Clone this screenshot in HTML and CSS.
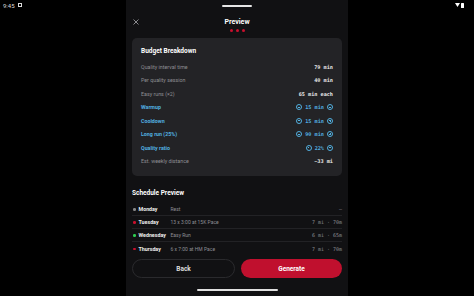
FILE: index.html
```html
<!DOCTYPE html>
<html>
<head>
<meta charset="utf-8">
<link rel="stylesheet" href="styles.css">
</head>
<body>
<div class="status">
  <div class="status-left"><span class="time">9:45</span><span class="sq"></span></div>
  <div class="status-right">
    <svg width="5" height="4" viewBox="0 0 5 4"><path d="M0 0 H5 L2.5 4 Z" fill="#fff"/></svg>
    <span class="batt"></span>
  </div>
</div>
<div class="stage">
  <div class="panel">
    <div class="handle"></div>
    <div class="header">
      <svg class="close" width="6" height="6" viewBox="0 0 6 6"><path d="M0.5 0.5 L5.5 5.5 M5.5 0.5 L0.5 5.5" stroke="#8a8a8e" stroke-width="1"/></svg>
      <div class="title">Preview</div>
      <div class="dots"><span></span><span></span><span></span></div>
    </div>
    <div class="card">
      <div class="card-title">Budget Breakdown</div>
      <div class="row"><span class="lbl">Quality interval time</span><span class="val">79 min</span></div>
      <div class="row"><span class="lbl">Per quality session</span><span class="val">40 min</span></div>
      <div class="row"><span class="lbl">Easy runs (×2)</span><span class="val">65 min each</span></div>
      <div class="row blue"><span class="lbl">Warmup</span><span class="ctrl"><i class="btn minus"></i><span class="val">15 min</span><i class="btn plus"></i></span></div>
      <div class="row blue"><span class="lbl">Cooldown</span><span class="ctrl"><i class="btn minus"></i><span class="val">15 min</span><i class="btn plus"></i></span></div>
      <div class="row blue"><span class="lbl">Long run (25%)</span><span class="ctrl"><i class="btn minus"></i><span class="val">90 min</span><i class="btn plus"></i></span></div>
      <div class="row blue"><span class="lbl">Quality ratio</span><span class="ctrl"><i class="btn minus"></i><span class="val">22%</span><i class="btn plus"></i></span></div>
      <div class="row"><span class="lbl">Est. weekly distance</span><span class="val">~33 mi</span></div>
    </div>
    <div class="sched-title">Schedule Preview</div>
    <div class="sched">
      <div class="srow"><span class="dot gray"></span><span class="day">Monday</span><span class="desc">Rest</span><span class="meta">—</span></div>
      <div class="srow"><span class="dot red"></span><span class="day">Tuesday</span><span class="desc">13 x 3:00 at 15K Pace</span><span class="meta">7 mi · 70m</span></div>
      <div class="srow"><span class="dot green"></span><span class="day">Wednesday</span><span class="desc">Easy Run</span><span class="meta">6 mi · 65m</span></div>
      <div class="srow"><span class="dot red"></span><span class="day">Thursday</span><span class="desc">6 x 7:00 at HM Pace</span><span class="meta">7 mi · 70m</span></div>
    </div>
    <div class="actions">
      <div class="back">Back</div>
      <div class="gen">Generate</div>
    </div>
    <div class="homebar"></div>
  </div>
</div>
</body>
</html>
```
FILE: styles.css
```css
* { box-sizing: border-box; }
html, body { margin: 0; padding: 0; }
body {
  width: 474px; height: 296px; background: #000; overflow: hidden;
  font-family: Roboto, "Liberation Sans", sans-serif; color: #fff;
  position: relative;
}
.status {
  position: absolute; left: 0; top: 0; width: 474px; height: 10px;
  display: flex; justify-content: space-between; align-items: center;
  padding: 0 10px 0 3px; z-index: 2;
}
.status-left { display: flex; align-items: center; gap: 3px; }
.time { font-size: 6px; color: #ddd; }
.sq { width: 4px; height: 4px; border: 1px solid #ddd; background: #000; }
.status-right { display: flex; align-items: center; gap: 1px; }
.batt { width: 3px; height: 5px; background: #fff; border-radius: 0.5px; }
.stage { display: flex; justify-content: center; height: 296px; }
.panel {
  width: 222px; height: 296px; background: #111113;
  display: flex; flex-direction: column; padding: 5px 6px 0;
}
.handle { align-self: center; width: 30px; height: 2px; background: #e6e6e6; border-radius: 1px; }
.header { position: relative; height: 30.7px; display: flex; flex-direction: column; align-items: center; padding-top: 9.5px; }
.close { position: absolute; left: 1px; top: 11.5px; }
.title { font-size: 7px; font-weight: 700; line-height: 10px; }
.dots { display: flex; gap: 3px; margin-top: 2px; }
.dots span { width: 3px; height: 3px; border-radius: 50%; background: #c8102e; }
.card {
  background: #232326; border-radius: 5px; padding: 8px 9px 8.5px;
  display: flex; flex-direction: column;
}
.card-title { font-size: 6.5px; font-weight: 700; line-height: 10px; margin-bottom: 4.6px; }
.row { height: 13.45px; display: flex; justify-content: space-between; align-items: center; }
.lbl { font-size: 5.3px; color: #8e8e93; }
.val { font-family: "DejaVu Sans Mono", "Liberation Mono", monospace; font-weight: 700; font-size: 5.2px; color: #e8e8e8; }
.blue .lbl { color: #52b0e0; font-weight: 700; }
.blue .val { color: #52b0e0; }
.ctrl { display: flex; align-items: center; gap: 3px; }
.btn { width: 6px; height: 6px; border: 0.8px solid #52b0e0; border-radius: 50%; position: relative; display: inline-block; }
.btn::before { content: ""; position: absolute; left: 1.2px; right: 1.2px; top: 50%; height: 0.8px; margin-top: -0.4px; background: #52b0e0; }
.plus::after { content: ""; position: absolute; top: 1.2px; bottom: 1.2px; left: 50%; width: 0.8px; margin-left: -0.4px; background: #52b0e0; }
.sched-title { font-size: 6.5px; font-weight: 700; line-height: 10px; margin-top: 11.5px; }
.sched { margin-top: 5.5px; display: flex; flex-direction: column; }
.srow { height: 13px; display: flex; align-items: center; border-bottom: 0.5px solid #222225; }
.srow:last-child { border-bottom: none; }
.dot { width: 2.5px; height: 2.5px; border-radius: 50%; margin: 0 3px 0 1px; }
.gray { background: #888; }
.red { background: #c8102e; }
.green { background: #2ecc52; }
.day { font-size: 5.3px; font-weight: 700; width: 32px; color: #eee; }
.desc { font-size: 5px; color: #8e8e93; flex: 1; }
.meta { font-family: "DejaVu Sans Mono", "Liberation Mono", monospace; font-size: 5px; color: #8e8e93; white-space: pre; }
.actions { display: flex; gap: 6px; margin-top: 4px; }
.back, .gen {
  flex: 1; height: 19px; border-radius: 10px; display: flex; align-items: center; justify-content: center;
  font-size: 6.5px; font-weight: 700;
}
.back { border: 1px solid #2a2a2d; color: #ddd; }
.gen { background: #c0102e; color: #fff; }
.homebar { align-self: center; width: 81px; height: 2px; background: #e0e0e0; border-radius: 1px; margin-top: 11px; }
```
